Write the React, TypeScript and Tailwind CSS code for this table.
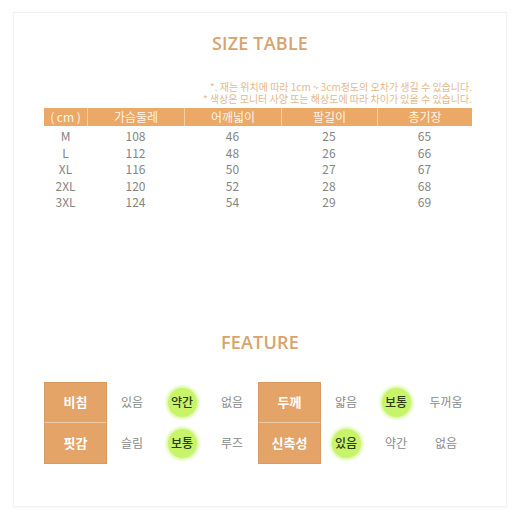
const font = 'font-["Noto_Sans_CJK_KR","Noto_Sans",sans-serif]';

const sizes = [
  ['M', '108', '46', '25', '65'],
  ['L', '112', '48', '26', '66'],
  ['XL', '116', '50', '27', '67'],
  ['2XL', '120', '52', '28', '68'],
  ['3XL', '124', '54', '29', '69'],
];

const headers = ['( cm )', '가슴둘레', '어깨넓이', '팔길이', '총기장'];
const colWidths = ['w-[43px]', 'w-[97px]', 'w-[97px]', 'w-[96px]', 'w-[95px]'];

interface Feature {
  label: string;
  options: string[];
  active: number;
}

const features: Feature[][] = [
  [
    { label: '비침', options: ['있음', '약간', '없음'], active: 1 },
    { label: '두께', options: ['얇음', '보통', '두꺼움'], active: 1 },
  ],
  [
    { label: '핏감', options: ['슬림', '보통', '루즈'], active: 1 },
    { label: '신축성', options: ['있음', '약간', '없음'], active: 0 },
  ],
];

function Title({ children }: { children: string }) {
  return (
    <h2 className='text-center font-["Open_Sans",sans-serif] text-[18px] leading-[28px] font-semibold tracking-[0.2px] text-[#d6a46c]'>
      {children}
    </h2>
  );
}

function FeatureCell({ f, top }: { f: Feature; top: boolean }) {
  return (
    <div className="flex h-[41px]">
      <div
        className={`flex w-[63px] items-center justify-center border-x border-[#d69a63] bg-[#e4a468] text-[13px] font-bold text-white ${
          top ? 'border-t border-b border-b-[#f1c9a0]' : 'border-b'
        }`}
      >
        {f.label}
      </div>
      {f.options.map((o, i) => (
        <div key={o + i} className="flex w-[50px] items-center justify-center">
          {i === f.active ? (
            <span className="flex h-[29px] w-[29px] items-center justify-center rounded-full bg-[#c8f46a] text-[12px] font-medium text-[#2d3a14] shadow-[0_0_3px_2px_#dcf8a4]">
              {o}
            </span>
          ) : (
            <span className="text-[12px] text-[#8a8a8a]">{o}</span>
          )}
        </div>
      ))}
    </div>
  );
}

export default function App() {
  return (
    <div className={`h-[520px] w-[520px] bg-white pt-[12px] pl-[13px] ${font}`}>
      <div className="h-[495px] w-[494px] border border-[#f2f2f2] bg-white pt-[16px] shadow-[0_1px_3px_rgba(0,0,0,0.04)]">
        <Title>SIZE TABLE</Title>

        <div className="mt-[24px] pr-[34px] text-right text-[10px] leading-[12px] text-[#e2b98c]">
          <p>*. 재는 위치에 따라 1cm ~ 3cm정도의 오차가 생길 수 있습니다.</p>
          <p>* 색상은 모니터 사양 또는 해상도에 따라 차이가 있을 수 있습니다.</p>
        </div>

        <div className="ml-[30px] mt-[3px] w-[428px]">
          <div className="flex h-[18px] bg-[#eba866] text-[12px] text-[#fff4e6]">
            {headers.map((h, i) => (
              <div
                key={h}
                className={`${colWidths[i]} flex items-center justify-center ${
                  i > 0 ? 'border-l border-[#f6cfa4]' : ''
                }`}
              >
                {h}
              </div>
            ))}
          </div>
          <div className="pt-[2px]">
            {sizes.map((row) => (
              <div key={row[0]} className="flex h-[16.5px] items-center text-[12px] text-[#858585]">
                {row.map((c, i) => (
                  <div key={i} className={`${colWidths[i]} text-center`}>
                    {c}
                  </div>
                ))}
              </div>
            ))}
          </div>
        </div>

        <div className="mt-[117px]">
          <Title>FEATURE</Title>
        </div>

        <div className="ml-[30px] mt-[26px]">
          {features.map((row, r) => (
            <div key={r} className="flex gap-[1px]">
              {row.map((f) => (
                <FeatureCell key={f.label} f={f} top={r === 0} />
              ))}
            </div>
          ))}
        </div>
      </div>
    </div>
  );
}
